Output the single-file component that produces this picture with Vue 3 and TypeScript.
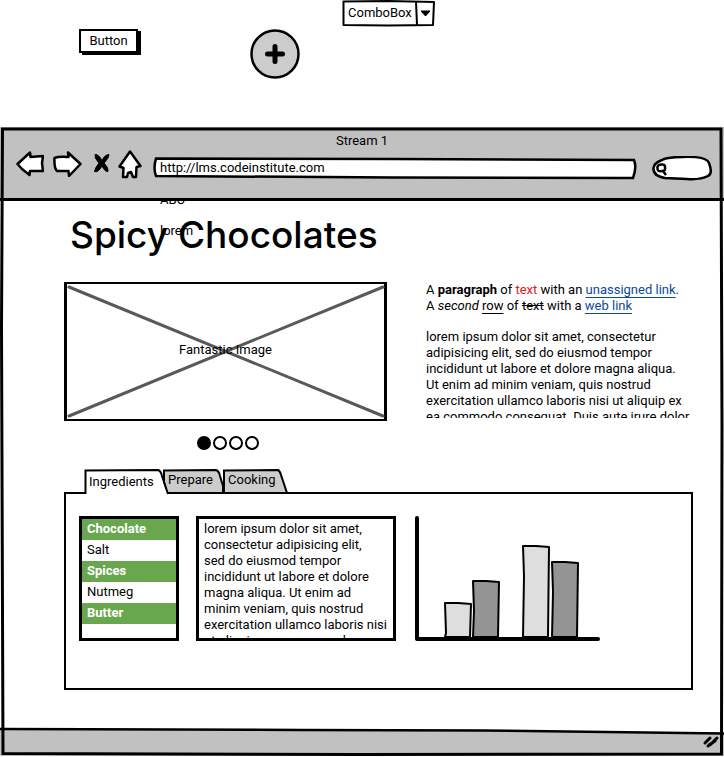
<script setup lang="ts">
import { ref } from 'vue'

interface Bar {
  x: number
  top: number
  fill: string
}

const combo = ref('ComboBox')
const address = ref('http://lms.codeinstitute.com')
const query = ref('')
const activeSlide = ref(0)
const activeTab = ref(0)

const ingredients = [
  { name: 'Chocolate', selected: true },
  { name: 'Salt', selected: false },
  { name: 'Spices', selected: true },
  { name: 'Nutmeg', selected: false },
  { name: 'Butter', selected: true },
]

const intro = [
  'lorem ipsum dolor sit amet, consectetur',
  'adipisicing elit, sed do eiusmod tempor',
  'incididunt ut labore et dolore magna aliqua.',
  'Ut enim ad minim veniam, quis nostrud',
  'exercitation ullamco laboris nisi ut aliquip ex',
  'ea commodo consequat. Duis aute irure dolor',
].join('\n')

const notes = ref(
  [
    'lorem ipsum dolor sit amet,',
    'consectetur adipisicing elit,',
    'sed do eiusmod tempor',
    'incididunt ut labore et dolore',
    'magna aliqua. Ut enim ad',
    'minim veniam, quis nostrud',
    'exercitation ullamco laboris nisi',
    'ut aliquip ex ea commodo',
  ].join('\n'),
)

const bars: Bar[] = [
  { x: 30, top: 87, fill: '#dedede' },
  { x: 58, top: 65, fill: '#949494' },
  { x: 108, top: 30, fill: '#dedede' },
  { x: 137, top: 46, fill: '#949494' },
]

function barPath(bar: Bar): string {
  const { x, top } = bar
  return `M${x} ${top} L${x + 13} ${top} L${x + 26} ${top + 1} L${x + 25} 121 L${x} 121 L${x + 1} ${top + 30} Z`
}
</script>

<template>
  <div class="page">
    <header class="palette">
      <button class="push" type="button">Button</button>
      <button class="add" type="button" aria-label="Add">
        <svg width="50" height="50" viewBox="0 0 50 50">
          <circle cx="25" cy="25" r="23.5" fill="#ccc" stroke="#000" stroke-width="2.5" />
          <path d="M25 17.500V32.500M17.500 25H32.500" fill="none" stroke="#000" stroke-width="5" stroke-linecap="round" />
        </svg>
      </button>
      <div class="combo">
        <select v-model="combo" aria-label="ComboBox">
          <option>ComboBox</option>
        </select>
        <svg class="frame" width="93" height="27" viewBox="0 0 93 27" aria-hidden="true">
          <path d="M1.500 1.500L46 1L92 2L91 25L46 25.500L1.500 25ZM74 1.500L75 25" fill="none" stroke="#000" stroke-width="2" stroke-linejoin="round" />
          <path d="M79 11H88L83.500 16Z" stroke="#000" stroke-linejoin="round" />
        </svg>
      </div>
    </header>

    <main class="browser">
      <svg class="frame" viewBox="0 0 724 629" preserveAspectRatio="none" aria-hidden="true">
        <path d="M2.500 2L721 2L722 300L721.500 627L360 627.500L3 626.500L1.500 200Z" />
      </svg>

      <div class="chrome">
        <p class="window-title">Stream 1</p>
        <div class="nav">
          <button type="button" aria-label="Back">
            <svg width="28" height="26" viewBox="0 0 28 26">
              <path d="M1.500 13L14 1.500L14.500 6L27 5L26 12L27 20L14 20L13.500 24L6 18Z" />
            </svg>
          </button>
          <button class="forward" type="button" aria-label="Forward">
            <svg width="29" height="26" viewBox="0 0 29 26">
              <path d="M1.500 7Q6 5 15.500 6L15 1.500L27.500 13L16 25L15.500 20L4 20Q1 17 1.500 7Z" />
            </svg>
          </button>
          <button class="stop" type="button" aria-label="Stop">
            <svg width="18" height="22" viewBox="0 0 18 22">
              <path class="blot" d="M2 1.500Q6 1 9 8Q11 2 16 1.500Q16 5 11 10Q16 15 15 18.500Q12 19 9 13Q5 20 1.500 18.500Q2 15 6 10Q1 5 2 1.500Z" />
            </svg>
          </button>
          <button class="home" type="button" aria-label="Home">
            <svg width="24" height="29" viewBox="0 0 24 29">
              <path d="M12 1.500L22.500 16L18.500 17L18 27H15L13 22L10 23L9 27L5 27L5.500 18L1.500 16.500Z" />
            </svg>
          </button>
          <div class="address">
            <svg class="frame" viewBox="0 0 482 22" preserveAspectRatio="none" aria-hidden="true">
              <path class="paper" d="M3 0.500L240 1L480 2Q483 9 479 20L240 19.500L3 18Q0 10 3 0.500Z" />
            </svg>
            <input v-model="address" type="text" aria-label="Address" />
          </div>
          <div class="search">
            <svg class="frame" width="60" height="25" viewBox="0 0 60 25" aria-hidden="true">
              <path class="paper" d="M10 4Q16 1 30 1Q54 0 57 7Q61 18 56 20Q48 24 35 23L13 22Q1 20 1.500 12Q2 7 10 4Z" />
              <path class="lens" d="M9 8.500Q13 8 13 11Q14 15 10 15Q5 16 5.500 12Q5 9 9 8.500M11 15L14 19" />
            </svg>
            <input v-model="query" type="text" aria-label="Search" />
          </div>
        </div>
      </div>

      <div class="canvas">
        <span class="stray abc">ABC</span>
        <span class="stray lorem">lorem</span>
        <h1>Spicy Chocolates</h1>

        <div class="hero">
          <section class="gallery">
            <figure>
              <svg viewBox="0 0 323 139" preserveAspectRatio="none" aria-hidden="true">
                <path d="M5 5L319 134M5 134L319 5" fill="none" stroke="#595959" stroke-width="3" stroke-linecap="round" />
              </svg>
              <figcaption>Fantastic Image</figcaption>
            </figure>
            <div class="dots">
              <button
                v-for="n in 4"
                :key="n"
                type="button"
                :class="{ on: activeSlide === n - 1 }"
                :aria-label="`Slide ${n}`"
                @click="activeSlide = n - 1"
              ></button>
            </div>
          </section>
          <section class="copy">
            <p>
              A <b>paragraph</b> of <span class="red">text</span> with an <a href="#">unassigned link</a><span class="blue">.</span><br />
              A <i>second</i> <u>row</u> of <s>text</s> with a <a href="#">web link</a>
            </p>
            <p class="lines">{{ intro }}</p>
          </section>
        </div>

        <section class="tabbed">
          <div class="tabs" role="tablist">
            <button class="tab first" type="button" role="tab" :aria-selected="activeTab === 0" @click="activeTab = 0">
              <svg class="frame" width="86" height="26" viewBox="0 0 86 26" aria-hidden="true">
                <path class="fill" d="M1.500 26V1.500H74L84 26Z" />
                <path class="line" d="M1.500 25V1.500L74 1Q77 2 78 7L84 25" />
              </svg>
              <span>Ingredients</span>
            </button>
            <button class="tab" type="button" role="tab" :aria-selected="activeTab === 1" @click="activeTab = 1">
              <svg class="frame" width="60" height="25" viewBox="0 0 60 25" aria-hidden="true">
                <path d="M1 13V1.500L53 1Q56 2 57 7L60 17V24H4Z" />
              </svg>
              <span>Prepare</span>
            </button>
            <button class="tab third" type="button" role="tab" :aria-selected="activeTab === 2" @click="activeTab = 2">
              <svg class="frame" width="66" height="25" viewBox="0 0 66 25" aria-hidden="true">
                <path d="M1 24V1.500L55 1Q57 2 58 6L64 24Z" />
              </svg>
              <span>Cooking</span>
            </button>
          </div>
          <div class="panel" role="tabpanel">
            <ul class="list">
              <li v-for="item in ingredients" :key="item.name" :class="{ selected: item.selected }">{{ item.name }}</li>
            </ul>
            <textarea v-model="notes" aria-label="Notes"></textarea>
            <svg class="chart" width="185" height="125" viewBox="0 0 185 125" role="img" aria-label="Bar chart">
              <path v-for="bar in bars" :key="bar.x" :d="barPath(bar)" :fill="bar.fill" stroke="#000" stroke-width="2" stroke-linejoin="round" />
              <path d="M2 2V123H183" fill="none" stroke="#000" stroke-width="4" stroke-linecap="round" stroke-linejoin="round" />
            </svg>
          </div>
        </section>
      </div>

      <footer class="status">
        <svg class="edge" viewBox="0 0 720 6" preserveAspectRatio="none" aria-hidden="true">
          <path d="M0 0V1L300 1.500L480 2L720 5V0Z" fill="#fff" />
          <path d="M0 1L300 2L480 2.500L720 5.500" fill="none" stroke="#000" stroke-width="2.5" />
        </svg>
        <svg class="grip" width="18" height="14" viewBox="0 0 18 14" aria-hidden="true">
          <path d="M3 8L8 3M6 11L9 9L15 3M7 10L13 6" fill="none" stroke="#000" stroke-width="3" stroke-linecap="round" />
        </svg>
      </footer>
    </main>
  </div>
</template>

<style>
body {
  background: #fff;
}
</style>

<style scoped>
.page,
.page * {
  box-sizing: border-box;
}

.page {
  color: #000;
  font: 13px/16px Roboto, 'Open Sans', sans-serif;
}

button,
input,
select,
textarea {
  margin: 0;
  padding: 0;
  border: 0;
  background: none;
  color: inherit;
  font: inherit;
  outline: 0;
  border-radius: 0;
}

button svg {
  display: block;
}

p,
h1,
ul,
figure {
  margin: 0;
  padding: 0;
}

.frame {
  position: absolute;
  top: 0;
  left: 0;
  pointer-events: none;
}

.palette {
  display: flex;
  align-items: flex-start;
  height: 127px;
  padding-left: 79px;
}

.push {
  width: 59px;
  height: 24px;
  margin-top: 29px;
  border: 2px solid #000;
  box-shadow: 3px 2px 0 #000;
}

.add {
  margin: 29px 42px 0 112px;
}

.combo {
  position: relative;
  width: 93px;
  height: 27px;
}

.combo select {
  width: 100%;
  height: 25px;
  padding-left: 6px;
  appearance: none;
}

.browser {
  position: relative;
  display: flex;
  flex-direction: column;
  min-height: 629px;
}

.browser > .frame {
  z-index: 2;
  width: 100%;
  height: 100%;
}

.browser > .frame path {
  fill: none;
  stroke: #000;
  stroke-width: 3px;
  vector-effect: non-scaling-stroke;
}

.chrome {
  position: relative;
  z-index: 1;
  height: 74px;
  background: #c1c1c1;
  border-bottom: 3px solid #000;
}

.window-title {
  padding: 6px 0 1px;
  text-align: center;
}

.nav {
  display: flex;
  align-items: center;
  height: 28px;
  padding: 0 12px 0 16px;
}

.nav button path {
  fill: #fff;
  stroke: #000;
  stroke-width: 2.5px;
  stroke-linejoin: round;
}

.nav button .blot {
  fill: #000;
  stroke-width: 1px;
}

.forward {
  margin-left: 9px;
}

.stop {
  margin-left: 11px;
}

.home {
  margin-left: 7px;
}

.address {
  position: relative;
  flex: 1;
  height: 22px;
  margin: 10px 16px 0 11px;
}

.address .frame {
  width: 100%;
  height: 100%;
  overflow: visible;
}

.paper {
  fill: #fff;
  stroke: #000;
  stroke-width: 2.5px;
}

.lens {
  fill: none;
  stroke: #000;
  stroke-width: 2.5px;
}

.address input {
  position: relative;
  display: block;
  width: 100%;
  height: 18px;
  padding: 0 7px;
}

.search {
  position: relative;
  width: 60px;
  height: 25px;
  margin-top: 9px;
}

.search input {
  position: relative;
  width: 100%;
  height: 100%;
  padding: 0 6px 0 18px;
}

.canvas {
  position: relative;
  flex: 1;
  padding: 9px 31px 38px 64px;
}

.stray {
  position: absolute;
  left: 160px;
}

.stray.abc {
  top: -9px;
}

.stray.lorem {
  top: 22px;
}

h1 {
  height: 72px;
  padding-left: 6px;
  font: 500 37px/50px Inter, sans-serif;
}

.hero {
  display: flex;
  height: 187px;
}

.gallery {
  flex: 1;
}

figure {
  position: relative;
  display: grid;
  place-items: center;
  height: 139px;
  padding-bottom: 4px;
  border: 3px solid #000;
  border-width: 2px 3px;
}

figure svg {
  position: absolute;
  inset: -2px -3px;
  width: calc(100% + 6px);
  height: calc(100% + 4px);
}

figcaption {
  position: relative;
}

.dots {
  display: flex;
  justify-content: center;
  gap: 2px;
  padding: 15px 0 0 5px;
}

.dots button {
  width: 14px;
  height: 14px;
  border: 2px solid #000;
  border-radius: 50%;
}

.dots .on {
  background: #000;
}

.copy {
  width: 267px;
  height: 136px;
  margin-left: 39px;
  overflow: hidden;
  white-space: nowrap;
}

.copy .lines {
  margin-top: 15px;
  white-space: pre;
}

.red {
  color: #d9201f;
}

a,
.blue {
  color: #0b4a96;
}

a,
u {
  text-underline-offset: 3px;
}

.tabs {
  position: relative;
  z-index: 1;
  display: flex;
  height: 25px;
  margin-bottom: -2px;
  padding-left: 20px;
}

.tab {
  position: relative;
  width: 60px;
  height: 25px;
  padding: 0 0 3px 5px;
  text-align: left;
}

.tab span {
  position: relative;
}

.tab path {
  fill: #ccc;
  stroke: #000;
  stroke-width: 2px;
}

.tab.first {
  z-index: 1;
  width: 79px;
  padding-bottom: 0;
}

.tab .fill {
  fill: #fff;
  stroke: none;
}

.tab .line {
  fill: none;
}

.tab.third {
  width: 66px;
}

.panel {
  display: flex;
  align-items: flex-start;
  height: 198px;
  padding: 22px 13px;
  border: 2px solid #000;
}

.list {
  width: 100px;
  height: 125px;
  border: 3px solid #000;
  list-style: none;
}

.list li {
  height: 21px;
  padding-left: 5px;
  line-height: 20px;
}

.list .selected {
  background: #69a74e;
  color: #fff;
  font-weight: 700;
}

textarea {
  width: 200px;
  height: 125px;
  margin-left: 17px;
  padding: 2px 5px 0;
  border: 3px solid #000;
  overflow: hidden;
  resize: none;
  white-space: pre;
}

.chart {
  margin-left: 19px;
}

.status {
  position: relative;
  display: flex;
  justify-content: flex-end;
  align-items: flex-end;
  height: 28px;
  padding: 0 4px 7px;
  background: #c1c1c1;
}

.edge {
  position: absolute;
  top: 0;
  left: 0;
  width: 100%;
  height: 6px;
  overflow: visible;
}
</style>
